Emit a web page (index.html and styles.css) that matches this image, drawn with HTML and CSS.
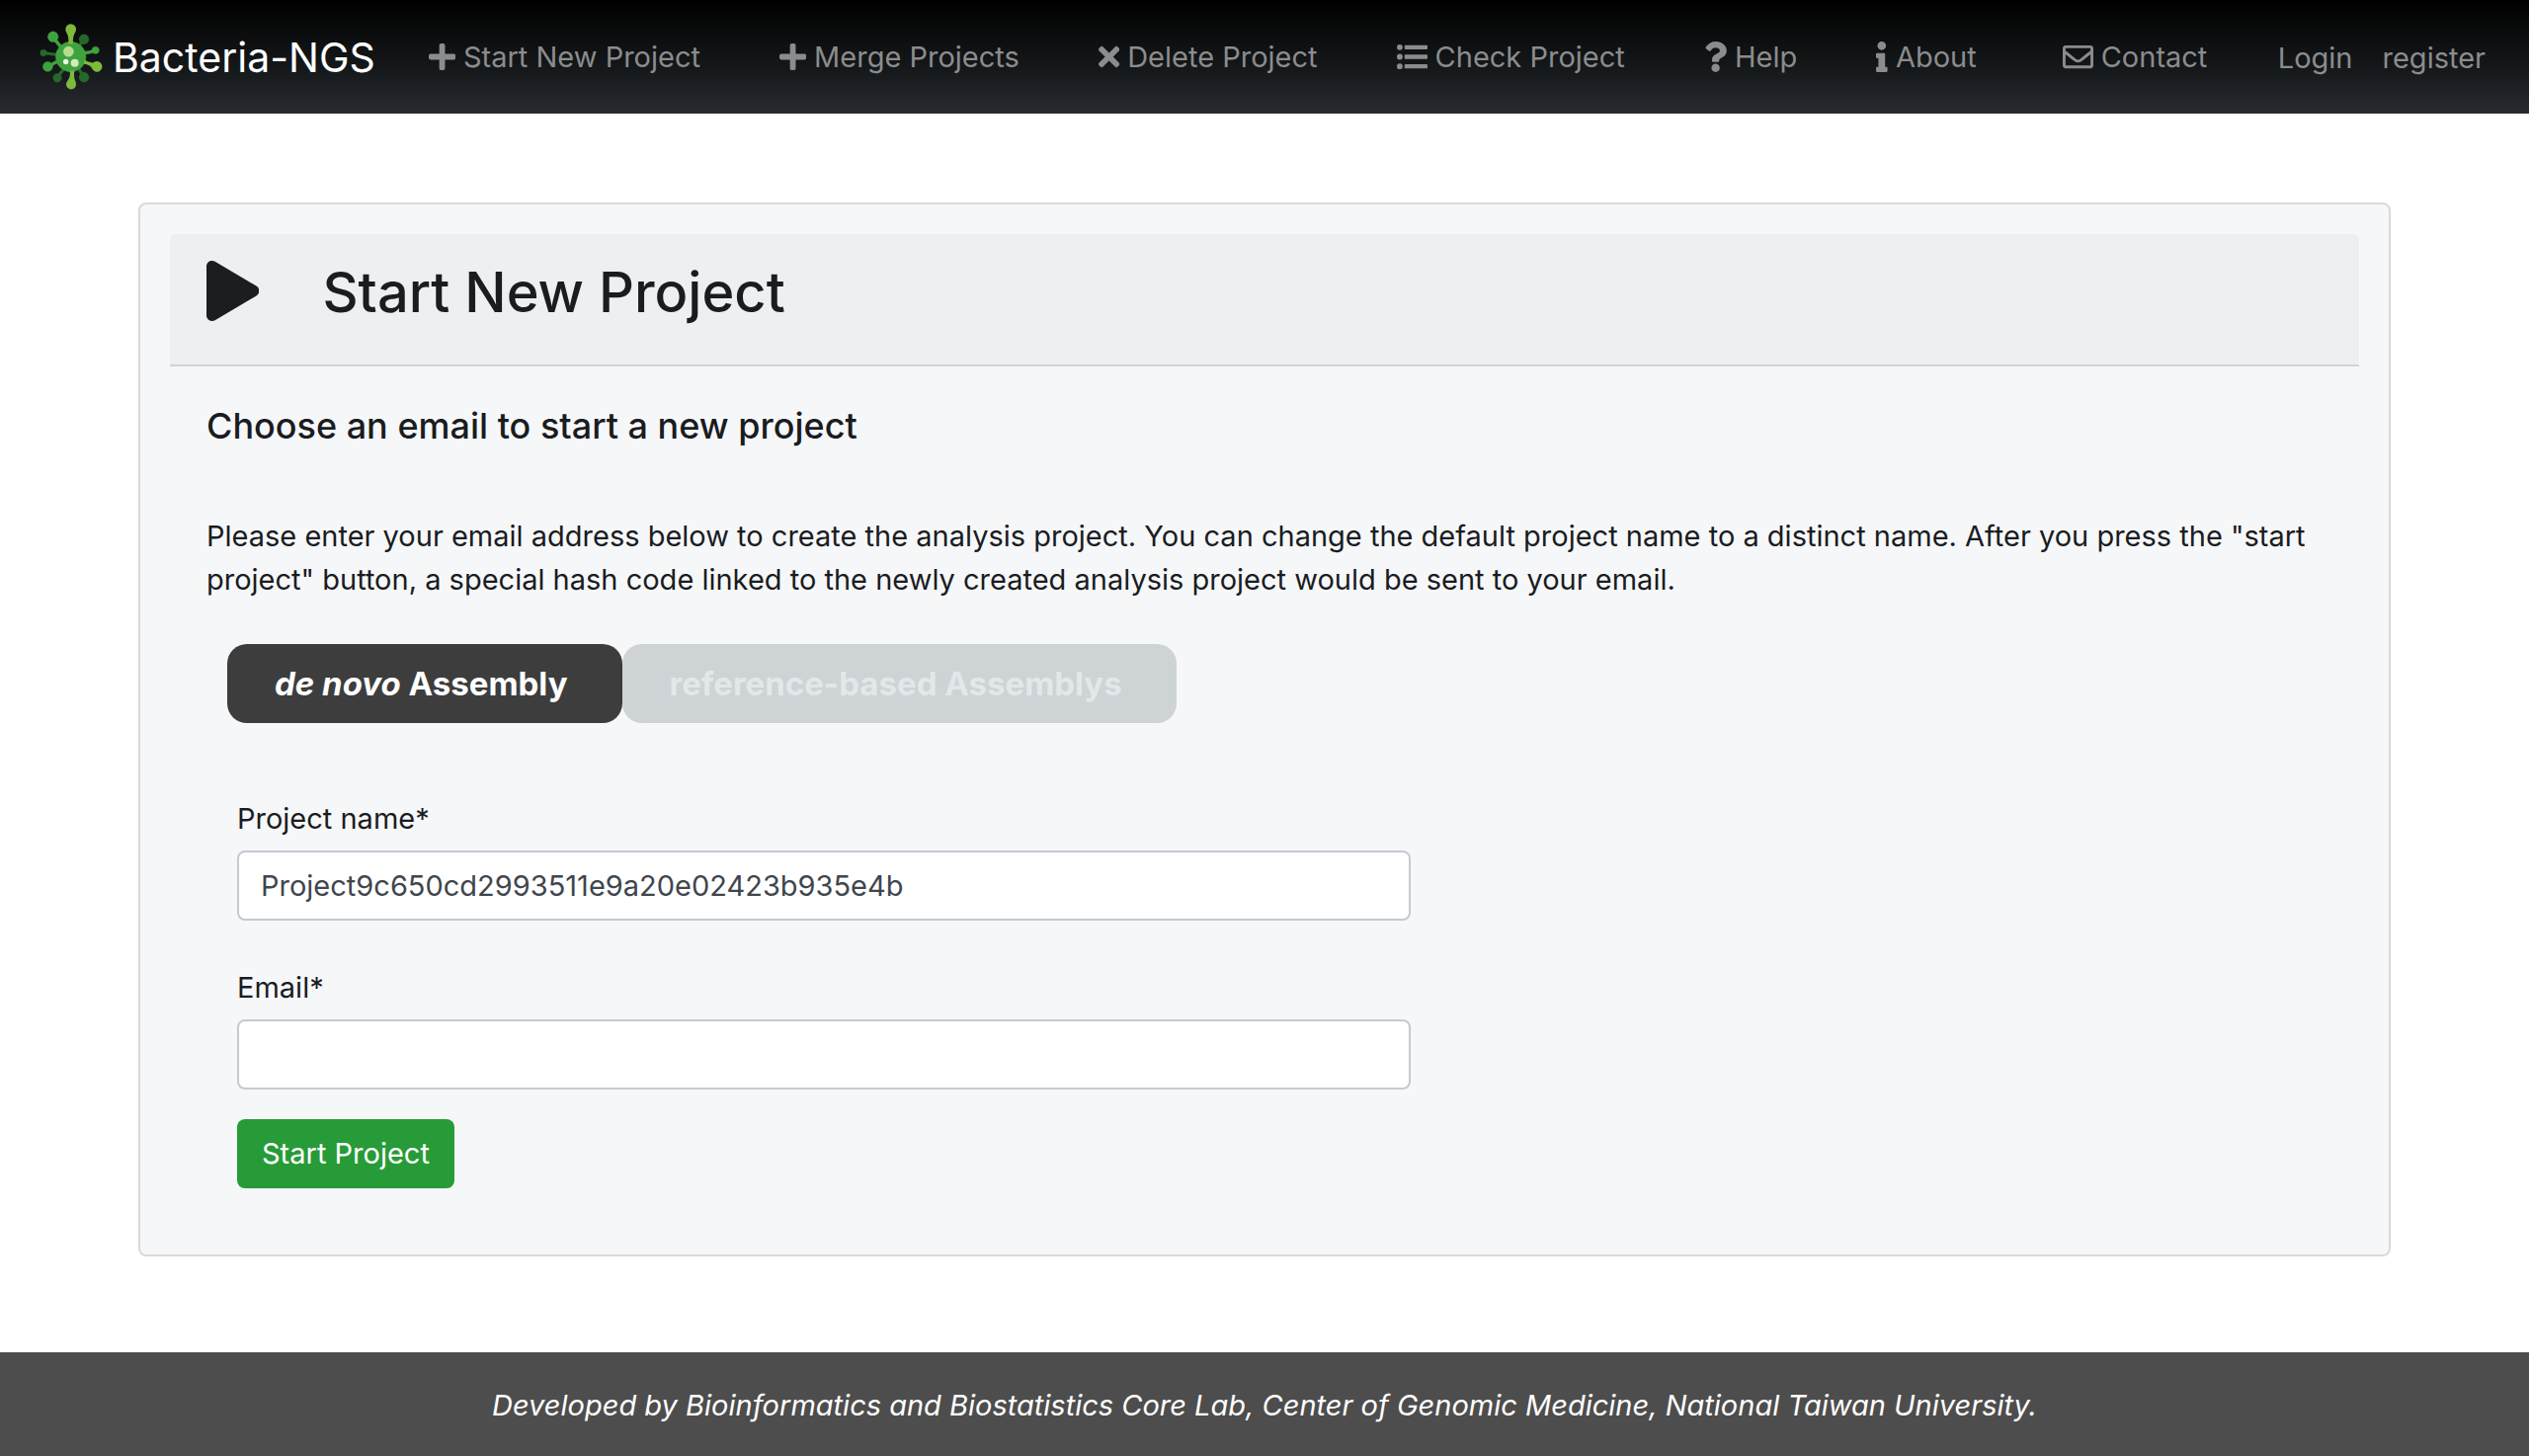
FILE: index.html
```html
<!DOCTYPE html>
<html lang="en">
<head>
<meta charset="utf-8">
<meta name="viewport" content="width=device-width, initial-scale=1">
<title>Bacteria-NGS</title>
<link rel="stylesheet" href="styles.css">
</head>
<body>
<header class="navbar">
  <a class="brand" href="#">
    <svg class="brand-logo" viewBox="30 38 192 206" aria-hidden="true">
      <g fill="#25692a" stroke="#25692a" stroke-linecap="round">
        <circle cx="165" cy="88" r="15"/><circle cx="42" cy="129" r="10"/><circle cx="84" cy="205" r="13"/><circle cx="165" cy="203" r="15"/>
        <path fill="none" stroke-width="9" d="M160 94l-12 18M46 130l40 5M88 198l16-20M162 198l-14-22"/>
      </g>
      <g fill="#3ea33e" stroke="#3ea33e" stroke-linecap="round">
        <circle cx="71" cy="80" r="16"/><circle cx="200" cy="121" r="11"/><circle cx="55" cy="171" r="15"/>
        <path fill="none" stroke-width="10" d="M76 88l22 27M196 122c-14 7-24 7-34 8M62 168c10-8 20-12 30-14"/>
        <circle cx="125" cy="141" r="46"/>
      </g>
      <g fill="#7dba3a">
        <path d="M109 57a16 16 0 1 1 32 0c0 13-11 13-9 45h-14c2-32-9-32-9-45z"/>
        <path d="M111 225a15 15 0 1 0 30 0c0-13-9-14-5-42h-14c4 28-11 29-11 42z"/>
        <path d="M166 151c14 6 23 11 32 5a16 16 0 1 1-8 22c-5-11-13-13-25-15z"/>
      </g>
      <circle cx="118" cy="125" r="16" fill="#b8dc94"/>
      <circle cx="137" cy="160" r="12" fill="#d3eabd"/>
      <circle cx="110" cy="156" r="8" fill="#f1f8e9"/>
    </svg>
    <span>Bacteria-NGS</span>
  </a>
  <nav class="menu">
    <a class="menu-link" href="#"><svg class="icon" viewBox="0 0 448 512" aria-hidden="true"><path d="M416 208H272V64c0-17.67-14.33-32-32-32h-32c-17.67 0-32 14.33-32 32v144H32c-17.67 0-32 14.33-32 32v32c0 17.67 14.33 32 32 32h144v144c0 17.67 14.33 32 32 32h32c17.67 0 32-14.33 32-32V304h144c17.67 0 32-14.33 32-32v-32c0-17.67-14.33-32-32-32z"/></svg>Start New Project</a>
    <a class="menu-link" href="#"><svg class="icon" viewBox="0 0 448 512" aria-hidden="true"><path d="M416 208H272V64c0-17.67-14.33-32-32-32h-32c-17.67 0-32 14.33-32 32v144H32c-17.67 0-32 14.33-32 32v32c0 17.67 14.33 32 32 32h144v144c0 17.67 14.33 32 32 32h32c17.67 0 32-14.33 32-32V304h144c17.67 0 32-14.33 32-32v-32c0-17.67-14.33-32-32-32z"/></svg>Merge Projects</a>
    <a class="menu-link" href="#"><svg class="icon" viewBox="0 0 352 512" aria-hidden="true"><path d="M242.72 256l100.07-100.07c12.28-12.28 12.28-32.19 0-44.48l-22.24-22.24c-12.28-12.28-32.19-12.28-44.48 0L176 189.28 75.93 89.21c-12.28-12.28-32.19-12.28-44.48 0L9.21 111.45c-12.28 12.28-12.28 32.19 0 44.48L109.28 256 9.21 356.07c-12.28 12.28-12.28 32.19 0 44.48l22.24 22.24c12.28 12.28 32.2 12.28 44.48 0L176 322.72l100.07 100.07c12.28 12.28 32.2 12.28 44.48 0l22.24-22.24c12.28-12.28 12.28-32.19 0-44.48L242.72 256z"/></svg>Delete Project</a>
    <a class="menu-link" href="#"><svg class="icon" viewBox="0 0 512 512" aria-hidden="true"><circle cx="48" cy="96" r="48"/><circle cx="48" cy="256" r="48"/><circle cx="48" cy="416" r="48"/><rect x="128" y="60" width="384" height="72" rx="16"/><rect x="128" y="220" width="384" height="72" rx="16"/><rect x="128" y="380" width="384" height="72" rx="16"/></svg>Check Project</a>
    <a class="menu-link" href="#"><svg class="icon" viewBox="0 0 384 512" aria-hidden="true"><path d="M202.021 0C122.202 0 70.503 32.703 29.914 91.026c-7.363 10.58-5.093 25.086 5.178 32.874l43.138 32.709c10.373 7.865 25.132 6.026 33.253-4.148 25.049-31.381 43.63-49.449 82.757-49.449 30.764 0 68.816 19.799 68.816 49.631 0 22.552-18.617 34.134-48.993 51.164-35.423 19.86-82.299 44.576-82.299 106.405V320c0 13.255 10.745 24 24 24h72.471c13.255 0 24-10.745 24-24v-5.773c0-42.86 125.268-44.645 125.268-160.627C377.504 66.256 286.902 0 202.021 0zM192 373.459c-38.196 0-69.271 31.075-69.271 69.271 0 38.195 31.075 69.27 69.271 69.27s69.271-31.075 69.271-69.271-31.075-69.27-69.271-69.27z"/></svg>Help</a>
    <a class="menu-link" href="#"><svg class="icon" viewBox="0 0 192 512" aria-hidden="true"><path d="M20 424.229h20V279.771H20c-11.046 0-20-8.954-20-20V212c0-11.046 8.954-20 20-20h112c11.046 0 20 8.954 20 20v212.229h20c11.046 0 20 8.954 20 20V492c0 11.046-8.954 20-20 20H20c-11.046 0-20-8.954-20-20v-47.771c0-11.046 8.954-20 20-20zM96 0C56.235 0 24 32.235 24 72s32.235 72 72 72 72-32.235 72-72S135.764 0 96 0z"/></svg>About</a>
    <a class="menu-link menu-contact" href="#"><svg class="icon" viewBox="0 0 512 512" aria-hidden="true"><path d="M464 64H48C21.49 64 0 85.49 0 112v288c0 26.51 21.49 48 48 48h416c26.51 0 48-21.49 48-48V112c0-26.51-21.49-48-48-48zm0 48v40.805c-22.422 18.259-58.168 46.651-134.587 106.49-16.841 13.247-50.201 45.072-73.413 44.701-23.208.375-56.579-31.459-73.413-44.701C106.18 199.465 70.425 171.067 48 152.805V112h416zM48 400V214.398c22.914 18.251 55.409 43.862 104.938 82.646 21.857 17.205 60.134 55.186 103.062 54.955 42.717.231 80.509-37.199 103.053-54.947 49.528-38.783 82.032-64.401 104.947-82.653V400H48z"/></svg>Contact</a>
  </nav>
  <div class="account">
    <a class="menu-link" href="#">Login</a>
    <a class="menu-link" href="#">register</a>
  </div>
</header>
<main class="main">
  <section class="card">
    <div class="card-header">
      <svg class="play" viewBox="0 0 448 512" aria-hidden="true"><path d="M424.4 214.7L72.4 6.6C43.8-10.3 0 6.1 0 47.9V464c0 37.5 40.7 60.1 72.4 41.3l352-208c31.4-18.5 31.5-64.1 0-82.6z"/></svg>
      <h1 class="title">Start New Project</h1>
    </div>
    <div class="card-body">
      <h2 class="subtitle">Choose an email to start a new project</h2>
      <p class="intro">Please enter your email address below to create the analysis project. You can change the default project name to a distinct name. After you press the "start project" button, a special hash code linked to the newly created analysis project would be sent to your email.</p>
      <div class="tabs">
        <button class="tab tab-active" type="button"><i>de novo</i> Assembly</button>
        <button class="tab" type="button">reference-based Assemblys</button>
      </div>
      <form class="form">
        <div class="field">
          <label class="label" for="project-name">Project name*</label>
          <input class="input" id="project-name" type="text" value="Project9c650cd2993511e9a20e02423b935e4b">
        </div>
        <div class="field">
          <label class="label" for="email">Email*</label>
          <input class="input" id="email" type="email">
        </div>
        <button class="submit" type="button">Start Project</button>
      </form>
    </div>
  </section>
</main>
<footer class="footer">Developed by Bioinformatics and Biostatistics Core Lab, Center of Genomic Medicine, National Taiwan University.</footer>
</body>
</html>
```
FILE: styles.css
```css
* {
  box-sizing: border-box;
}

body {
  margin: 0;
  min-height: 100vh;
  display: flex;
  flex-direction: column;
  background: #fff;
  color: #1a1c1f;
  font-family: Inter, "Liberation Sans", sans-serif;
  font-size: 29px;
  line-height: 44px;
}

.navbar {
  display: flex;
  align-items: center;
  height: 115px;
  padding: 0 44px 0 40px;
  background: linear-gradient(#000, #15181a 60%, #272b30);
}

.brand {
  display: flex;
  align-items: center;
  gap: 10px;
  color: #fff;
  font-size: 41px;
  text-decoration: none;
}

.brand-logo {
  width: 64px;
  height: 69px;
}

.menu {
  display: flex;
  gap: 80px;
  margin-left: 54px;
}

.menu-link {
  display: flex;
  align-items: center;
  gap: 8px;
  color: #8b8c8d;
  text-decoration: none;
  white-space: nowrap;
}

.menu-contact {
  margin-left: 7px;
}

.icon {
  height: 31px;
  fill: currentColor;
}

.account {
  display: flex;
  gap: 30px;
  margin-left: auto;
  padding-top: 2px;
}

.main {
  flex: 1;
  padding: 90px 140px 96px;
}

.card {
  padding: 30px;
  border: 2px solid #d7d9db;
  border-radius: 8px;
  background: #f6f7f9;
}

.card-header {
  display: flex;
  align-items: flex-start;
  gap: 64px;
  height: 134px;
  padding: 27px 37px;
  border-bottom: 2px solid #d0d2d4;
  border-radius: 6px 6px 0 0;
  background: #eeeff1;
}

.play {
  height: 61px;
  fill: #1a1e21;
}

.title {
  margin: 0;
  font-size: 56px;
  font-weight: 500;
  line-height: 64px;
}

.card-body {
  padding: 37px;
}

.subtitle {
  margin: 0;
  font-size: 36px;
  font-weight: 500;
  line-height: 46px;
}

.intro {
  margin: 67px 0 43px;
}

.tabs {
  display: flex;
  margin-left: 21px;
}

.tab {
  height: 80px;
  padding: 0 55px 0 48px;
  border: 0;
  border-radius: 20px;
  background: #ced3d6;
  color: #e4e7e9;
  font: inherit;
  font-size: 33px;
  font-weight: 700;
}

.tab-active {
  background: #3d3d3d;
  color: #fff;
}

.form {
  display: flex;
  flex-direction: column;
  align-items: flex-start;
  width: calc(100% * 7 / 12);
  padding: 75px 31px 0;
}

.field {
  display: flex;
  flex-direction: column;
  gap: 10px;
  width: 100%;
}

.field + .field {
  margin: 46px 0 30px;
}

.input {
  width: 100%;
  height: 71px;
  padding: 0 22px;
  border: 2px solid #c4cad1;
  border-radius: 8px;
  background: #fff;
  color: #3f464d;
  font: inherit;
}

.submit {
  height: 70px;
  padding: 0 25px;
  border: 0;
  border-radius: 8px;
  background: #279b37;
  color: #fff;
  font: inherit;
}

.footer {
  padding: 32px 40px 29px;
  background: #4d4d4d;
  color: #fff;
  font-style: italic;
  text-align: center;
}
```
